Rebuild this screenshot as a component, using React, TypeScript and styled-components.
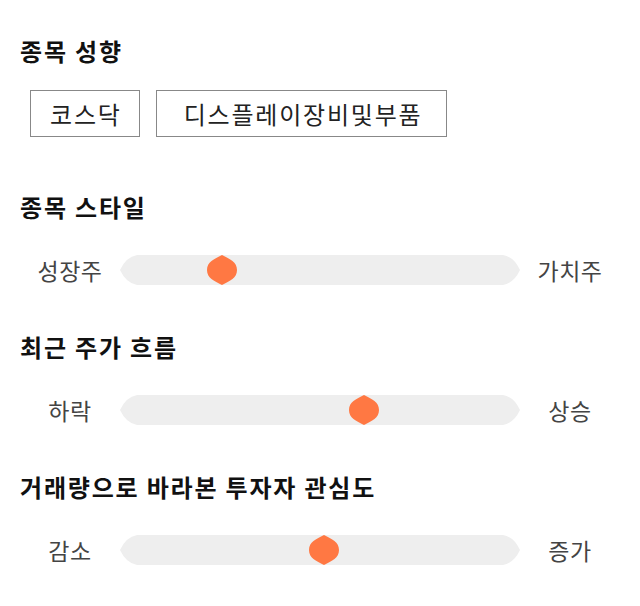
import React from "react";
import styled, { createGlobalStyle } from "styled-components";

const GlobalStyle = createGlobalStyle`
  body {
    margin: 0;
    background: #ffffff;
    font-family: "Noto Sans CJK KR", "Noto Sans", sans-serif;
  }
`;

const Page = styled.div`
  width: 640px;
  padding: 34px 20px 0;
  box-sizing: border-box;
`;

const Section = styled.section<{ $gap: number }>`
  margin-top: ${(p) => p.$gap}px;
`;

const Heading = styled.h2`
  margin: 0;
  font-size: 24px;
  line-height: 34px;
  letter-spacing: 1.8px;
  font-weight: 700;
  color: #111;
`;

const TagRow = styled.div`
  display: flex;
  gap: 16px;
  margin: 22px 0 0 10px;
`;

const Tag = styled.div<{ $padL: number; $padR: number }>`
  height: 47px;
  box-sizing: border-box;
  border: 1px solid #888;
  padding: 0 ${(p) => p.$padR}px 0 ${(p) => p.$padL}px;
  display: flex;
  align-items: center;
  font-size: 24px;
  color: #222;
  letter-spacing: 1.8px;
`;

const SliderRow = styled.div`
  display: grid;
  grid-template-columns: 100px 400px 100px;
  align-items: center;
  height: 50px;
  margin-top: 21px;
`;

const SideLabel = styled.span`
  text-align: center;
  font-size: 23px;
  letter-spacing: 0.5px;
  color: #444;
`;

const Track = styled.div`
  position: relative;
  height: 30px;

  &::before {
    content: "";
    position: absolute;
    inset: 0;
    background: #eeeeee;
    clip-path: path("M0 15 Q6 2 17 0 H383 Q394 2 400 15 Q394 28 383 30 H17 Q6 28 0 15 Z");
  }
`;

const Thumb = styled.svg`
  position: absolute;
  top: 0;
  width: 30px;
  height: 30px;
`;

type SliderProps = { left: string; right: string; value: number };

const Slider = ({ left, right, value }: SliderProps) => (
  <SliderRow>
    <SideLabel>{left}</SideLabel>
    <Track>
      <Thumb viewBox="0 0 30 30" style={{ left: `${(value / 100) * 370}px` }}>
        <path
          d="M15 0 C23 4 30 7 30 15 C30 23 23 26 15 30 C7 26 0 23 0 15 C0 7 7 4 15 0 Z"
          fill="#ff7843"
        />
      </Thumb>
    </Track>
    <SideLabel>{right}</SideLabel>
  </SliderRow>
);

const sliders = [
  { title: "종목 스타일", left: "성장주", right: "가치주", value: 23.5 },
  { title: "최근 주가 흐름", left: "하락", right: "상승", value: 62 },
  { title: "거래량으로 바라본 투자자 관심도", left: "감소", right: "증가", value: 51.2 },
];

export default function App() {
  return (
    <>
      <GlobalStyle />
      <Page>
        <Section $gap={0}>
          <Heading>종목 성향</Heading>
          <TagRow>
            <Tag $padL={19} $padR={17}>코스닥</Tag>
            <Tag $padL={27} $padR={24}>디스플레이장비및부품</Tag>
          </TagRow>
        </Section>
        {sliders.map((s, i) => (
          <Section key={s.title} $gap={i === 0 ? 53 : 35}>
            <Heading>{s.title}</Heading>
            <Slider left={s.left} right={s.right} value={s.value} />
          </Section>
        ))}
      </Page>
    </>
  );
}
